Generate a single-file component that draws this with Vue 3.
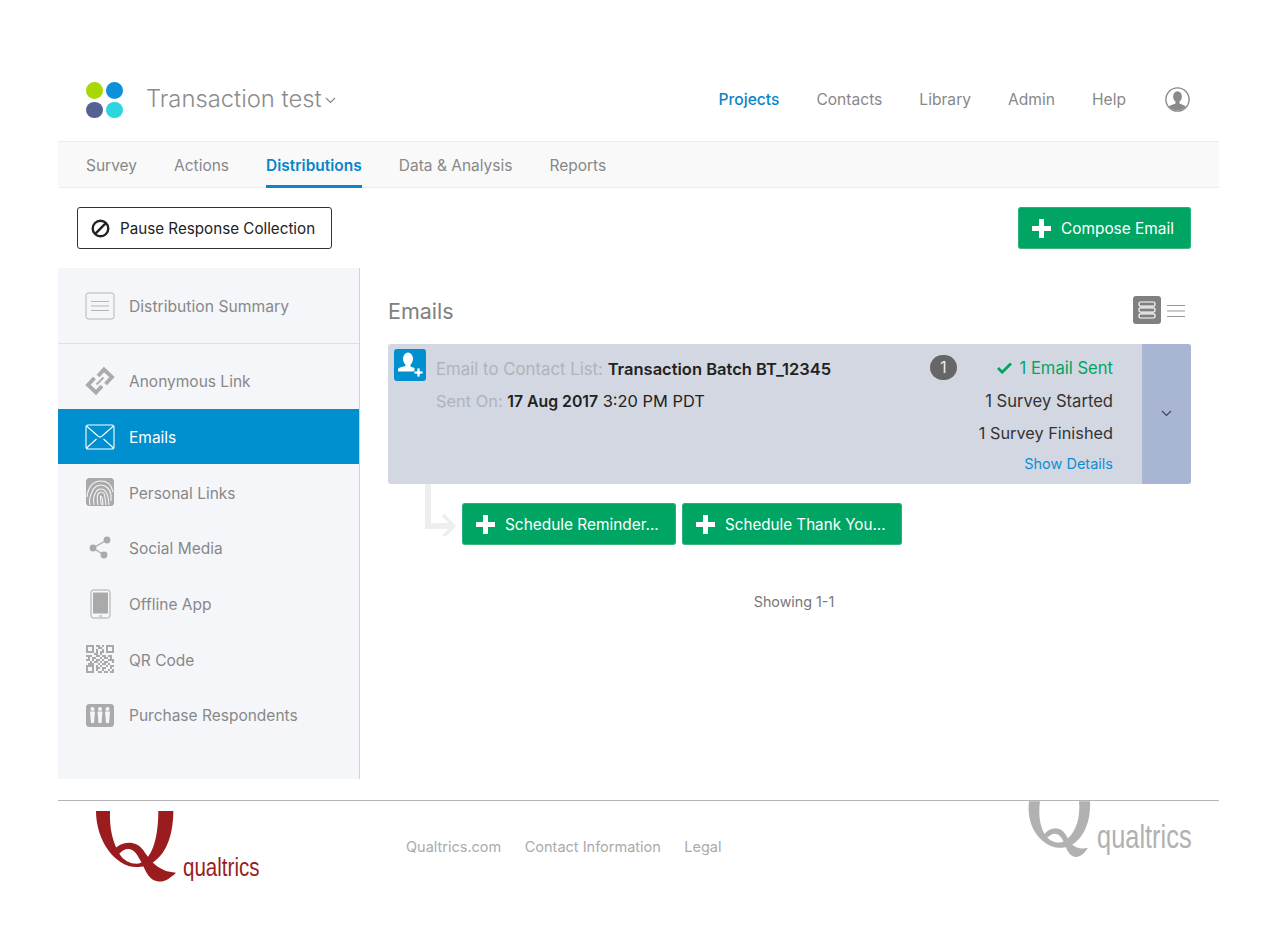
<script setup>
import { computed } from 'vue';

const navItems = ['Projects', 'Contacts', 'Library', 'Admin', 'Help'];
const tabs = ['Survey', 'Actions', 'Distributions', 'Data & Analysis', 'Reports'];
const sideItems = [
  { name: 'Anonymous Link', icon: 'link' },
  { name: 'Emails', icon: 'mail', active: true },
  { name: 'Personal Links', icon: 'finger' },
  { name: 'Social Media', icon: 'share' },
  { name: 'Offline App', icon: 'tablet' },
  { name: 'QR Code', icon: 'qr' },
  { name: 'Purchase Respondents', icon: 'people' },
];
const footerLinks = ['Qualtrics.com', 'Contact Information', 'Legal'];

// rough qr pattern, 14 x 14 cells
const qrRows = [
  '11110110101111',
  '10010011001001',
  '10010100101001',
  '11110101101111',
  '00001101000000',
  '11100110110110',
  '01011001011010',
  '11010110100111',
  '00101101011001',
  '01110010110100',
  '11110101001011',
  '10010110110010',
  '10010100100101',
  '11110011011011',
];
const qrCells = computed(() => {
  const cells = [];
  qrRows.forEach((row, y) => {
    row.split('').forEach((c, x) => {
      if (c === '1') cells.push({ x: x * 2, y: y * 2 });
    });
  });
  return cells;
});
</script>

<template>
  <div class="page">
    <header class="top">
      <div class="brand">
        <div class="dots">
          <i class="dot lime"></i><i class="dot blue"></i>
          <i class="dot navy"></i><i class="dot cyan"></i>
        </div>
        <span class="project">Transaction test</span>
        <svg class="caret" width="11" height="7" viewBox="0 0 11 7"><path d="M1 1l4.500 4.500L10 1" fill="none" stroke="#888" stroke-width="1.200"/></svg>
      </div>
      <nav class="nav">
        <a v-for="(n, i) in navItems" :key="n" :class="{ on: i === 0 }">{{ n }}</a>
        <svg class="avatar" width="25" height="25" viewBox="0 0 25 25">
          <defs><clipPath id="av"><circle cx="12.500" cy="12.500" r="11"/></clipPath></defs>
          <circle cx="12.500" cy="12.500" r="11.600" fill="#fff" stroke="#8a8a8a" stroke-width="1.400"/>
          <g clip-path="url(#av)" fill="#8a8a8a">
            <ellipse cx="12.500" cy="9.600" rx="4.400" ry="5.400"/>
            <path d="M10.500 14h4v2.400l6 2.600V25H4v-6l6.500-2.600z"/>
          </g>
        </svg>
      </nav>
    </header>

    <div class="tabs">
      <a v-for="t in tabs" :key="t" :class="{ on: t === 'Distributions' }">{{ t }}</a>
    </div>

    <div class="toolbar">
      <button class="pause">
        <svg width="19" height="19" viewBox="0 0 19 19"><circle cx="9.500" cy="9.500" r="7.800" fill="none" stroke="#222" stroke-width="2.400"/><path d="M4.200 14.800L14.800 4.200" stroke="#222" stroke-width="2.400"/></svg>
        Pause Response Collection
      </button>
      <button class="green compose">
        <svg class="plus" width="19" height="19" viewBox="0 0 19 19"><path d="M7 0h5v7h7v5h-7v7H7v-7H0V7h7z" fill="#fff"/></svg>
        Compose Email
      </button>
    </div>

    <div class="body">
      <aside class="side">
        <div class="summary">
          <svg class="ico" width="30" height="30" viewBox="0 0 30 30">
            <rect x="1" y="2" width="28" height="26" rx="2.500" fill="none" stroke="#b5b5b5" stroke-width="1"/>
            <path d="M6 10.500h18M6 15h18M6 19.500h18" stroke="#b5b5b5" stroke-width="1"/>
          </svg>
          <span>Distribution Summary</span>
        </div>
        <ul class="links">
          <li v-for="item in sideItems" :key="item.name" :class="{ active: item.active }">
            <svg class="ico" width="30" height="30" viewBox="0 0 30 30">
              <g v-if="item.icon === 'link'" fill="none" stroke="#aaa" stroke-width="3.800">
                <path d="M13 10l6-6.500L27 11l-6.500 7"/>
                <path d="M17 20l-6 6.500L3 19l6.500-7"/>
                <path d="M11.500 18.500l7-7" stroke-width="1.800"/>
              </g>
              <g v-else-if="item.icon === 'mail'" fill="none" stroke="#fff" stroke-width="1.100">
                <rect x="1" y="3" width="28" height="24" rx="2"/>
                <path d="M1.500 4l12 10.500q1.500 1 3 0L28.500 4M1.500 26l10-9M28.500 26l-10-9"/>
              </g>
              <g v-else-if="item.icon === 'finger'">
                <rect x="1" y="1" width="28" height="28" rx="3.500" fill="#aaa"/>
                <g fill="none" stroke="#f5f6fa" stroke-width="1.100">
                  <path d="M2 20C3 9 9 4 16 4s11 5 12 11"/>
                  <path d="M5 28c-1-4 0-9 2-13 2-5 6-7 9-7 5 0 9 4 10 10v6"/>
                  <path d="M9 28c-1-5 0-10 2-13 1-2 3-3 5-3 4 0 6 4 7 8l1 8"/>
                  <path d="M13 28c-1-4-1-8 0-11 1-1 2-2 3-2 3 0 4 3 4 6l1 7"/>
                  <path d="M16.500 28c-1-3-1-6-1-9 1 0 2 2 2 4l.5 5"/>
                </g>
              </g>
              <g v-else-if="item.icon === 'share'" fill="#aaa">
                <path d="M8 15l14-8M8 15l11 7" stroke="#aaa" stroke-width="1.300"/>
                <circle cx="8" cy="15" r="3.400"/>
                <circle cx="22" cy="7" r="3.400"/>
                <circle cx="19" cy="22" r="3.400"/>
              </g>
              <g v-else-if="item.icon === 'tablet'">
                <rect x="6" y="1" width="19" height="28" rx="2.500" fill="none" stroke="#aaa" stroke-width="1"/>
                <rect x="8" y="3.500" width="15" height="21" fill="#aaa"/>
                <rect x="14" y="26.500" width="3" height="1" fill="#aaa"/>
              </g>
              <g v-else-if="item.icon === 'qr'" fill="#aaa">
                <rect v-for="(c, i) in qrCells" :key="i" :x="c.x + 1" :y="c.y + 1" width="2" height="2"/>
              </g>
              <g v-else>
                <rect x="1" y="4" width="28" height="23" rx="3.500" fill="#aaa"/>
                <g fill="#f5f6fa">
                  <circle cx="7.500" cy="9" r="2"/><circle cx="15" cy="9" r="2"/><circle cx="22.500" cy="9" r="2"/>
                  <path d="M5 11.500h5l-1 11.500H6zM12.500 11.500h5l-1 11.500h-3zM20 11.500h5l-1 11.500h-3z"/>
                </g>
              </g>
            </svg>
            <span>{{ item.name }}</span>
          </li>
        </ul>
      </aside>

      <main class="main">
        <div class="main-head">
          <h2>Emails</h2>
          <div class="views">
            <span class="view-on">
              <svg width="18" height="18" viewBox="0 0 18 18" fill="none" stroke="#fff" stroke-width="1.200">
                <rect x="1" y="1" width="16" height="4.200" rx="1.500"/>
                <rect x="1" y="6.900" width="16" height="4.200" rx="1.500"/>
                <rect x="1" y="12.800" width="16" height="4.200" rx="1.500"/>
              </svg>
            </span>
            <svg width="18" height="14" viewBox="0 0 18 14" stroke="#999" stroke-width="1.100"><path d="M0 1.500h18M0 7h18M0 12.500h18"/></svg>
          </div>
        </div>

        <section class="card">
          <div class="card-icon">
            <svg width="32" height="32" viewBox="0 0 32 32">
              <rect width="32" height="32" rx="3" fill="#0090d0"/>
              <g fill="#fff">
                <ellipse cx="14" cy="10" rx="5" ry="6.500"/>
                <path d="M11.500 15h5v2.500l4 1.500v3.500H4V20.500q0-1.500 2-2l5.500-1.500z"/>
                <path d="M23 19h3v3h3v3h-3v3h-3v-3h-3v-3h3z" stroke="#0090d0" stroke-width=".8"/>
              </g>
            </svg>
          </div>
          <div class="card-info">
            <p class="line"><span class="lbl">Email to Contact List: </span><b>Transaction Batch BT_12345</b></p>
            <p class="line second"><span class="lbl">Sent On: </span><b>17 Aug 2017</b> 3:20 PM PDT</p>
          </div>
          <div class="count">1</div>
          <div class="stats">
            <div class="sent">
              <svg width="15" height="12" viewBox="0 0 15 12"><path d="M1 6l4.200 4.200L14 1.500" fill="none" stroke="#00a564" stroke-width="2.800"/></svg>
              1 Email Sent
            </div>
            <div class="stat">1 Survey Started</div>
            <div class="stat">1 Survey Finished</div>
            <a class="details">Show Details</a>
          </div>
          <div class="expand">
            <svg width="11" height="7" viewBox="0 0 11 7"><path d="M1 1l4.500 4.500L10 1" fill="none" stroke="#444" stroke-width="1.100"/></svg>
          </div>
        </section>

        <div class="followups">
          <svg class="elbow" width="32" height="52" viewBox="0 0 32 52" fill="none" stroke="#eeeeee" stroke-width="6">
            <path d="M4 0v42h24"/>
            <path d="M19 31l11 11-11 11" stroke-width="3.500"/>
          </svg>
          <button class="green reminder">
            <svg class="plus" width="19" height="19" viewBox="0 0 19 19"><path d="M7 0h5v7h7v5h-7v7H7v-7H0V7h7z" fill="#fff"/></svg>
            Schedule Reminder...
          </button>
          <button class="green thanks">
            <svg class="plus" width="19" height="19" viewBox="0 0 19 19"><path d="M7 0h5v7h7v5h-7v7H7v-7H0V7h7z" fill="#fff"/></svg>
            Schedule Thank You...
          </button>
        </div>

        <div class="showing">Showing 1-1</div>
      </main>
    </div>

    <footer class="foot">
      <div class="logo red">
        <svg width="170" height="72" viewBox="78 47 510 216" fill="#9b1c1f">
          <path d="M78 47h42c-2 53 8 93 28 128 12 20 32 30 52 30 35 0 65-55 65-158h45c0 83-30 163-105 168C140 220 78 140 78 47z"/>
          <path d="M130 165c20-25 65-35 90 0 20 30 45 65 98 67-18 18-38 30-56 26-32-6-37-43-57-73-15-30-40-30-57-10z"/>
        </svg>
        <span class="word">qualtrics</span>
      </div>
      <div class="foot-links">
        <a v-for="l in footerLinks" :key="l">{{ l }}</a>
      </div>
      <div class="logo gray">
        <svg width="64" height="57" viewBox="82 30 192 170" fill="#b1b1b1">
          <path d="M85 30h33c-6 40 0 85 22 110 15 15 35 18 50 10 35-20 50-70 45-120h33c4 70-28 135-83 140C125 172 75 110 85 30z"/>
          <path d="M130 130c20-25 50-25 65 0 15 30 30 48 67 40-12 20-27 30-40 27-27-7-27-47-44-62-13-13-28-7-38 5z"/>
        </svg>
        <span class="word">qualtrics</span>
      </div>
    </footer>
  </div>
</template>

<style scoped>
.page {
  width: 1161px;
  margin-left: 58px;
  font-family: Inter, "Liberation Sans", sans-serif;
  font-size: 15.500px;
  color: #888;
}
a { cursor: pointer; }
.top {
  height: 142px;
  box-sizing: border-box;
  padding: 81px 29px 0 28px;
  display: flex;
  justify-content: space-between;
  align-items: flex-start;
  border-bottom: 1px solid #ececec;
}
.brand {
  display: flex;
  align-items: center;
  height: 37px;
}
.dots {
  display: grid;
  grid-template-columns: 17px 17px;
  grid-auto-rows: 16.500px;
  gap: 3px;
  margin: 1px 23px 0 0;
}
.dot { border-radius: 50%; display: block; }
.lime { background: #a9d800; }
.blue { background: #0c90dc; }
.navy { background: #556193; }
.cyan { background: #2ed5de; }
.project {
  font-size: 23.800px;
  font-weight: 300;
  color: #8c8c8c;
  margin: -2px 3px 0 0;
}
.caret { margin-top: 2px; }
.nav {
  display: flex;
  align-items: center;
  gap: 37px;
  height: 37px;
  font-size: 15.600px;
}
.nav a.on { color: #0a85c7; font-weight: 500; }
.avatar { margin-left: 2px; }
.tabs {
  height: 46px;
  box-sizing: border-box;
  padding-left: 28px;
  display: flex;
  gap: 37px;
  background: #f9f9f9;
  border-bottom: 1px solid #ececec;
}
.tabs a {
  height: 46px;
  line-height: 47px;
  box-sizing: border-box;
}
.tabs a.on {
  color: #0a85c7;
  font-weight: 600;
  border-bottom: 3px solid #0a85c7;
}
.toolbar {
  height: 80px;
  box-sizing: border-box;
  padding: 19px 28px 0 19px;
  display: flex;
  justify-content: space-between;
  align-items: flex-start;
}
button {
  font-family: inherit;
  font-size: 15.400px;
  height: 42px;
  border-radius: 3px;
  display: inline-flex;
  align-items: center;
  cursor: pointer;
  box-sizing: border-box;
}
.pause {
  width: 255px;
  padding: 0 0 0 13px;
  gap: 10px;
  font-size: 15.200px;
  background: #fff;
  border: 1px solid #333;
  color: #222;
}
.green {
  background: #00a564;
  border: 1px solid #28b07a;
  border-bottom-color: #3cb882;
  color: #fff;
  padding: 0 0 0 13px;
  gap: 10px;
}
.compose { width: 173px; }
.reminder { width: 214px; }
.thanks { width: 220px; font-size: 15.200px; }
.body { display: flex; }
.side {
  width: 302px;
  height: 511px;
  box-sizing: border-box;
  background: #f5f6fa;
  border-right: 1px solid #d3d3d6;
  flex: none;
}
.side span { margin-top: 2px; }
.summary {
  height: 76px;
  box-sizing: border-box;
  display: flex;
  align-items: center;
  padding-left: 27px;
  gap: 14px;
  font-size: 15.700px;
  border-bottom: 1px solid #dfe0e2;
}
.links {
  list-style: none;
  margin: 0;
  padding: 9px 0 0;
}
.links li {
  height: 55.700px;
  display: flex;
  align-items: center;
  padding-left: 27px;
  gap: 14px;
}
.links li.active {
  background: #0090d0;
  color: #fff;
}
.ico { flex: none; }
.main {
  flex: 1;
  padding: 0 28px;
  min-width: 0;
}
.main-head {
  height: 76px;
  display: flex;
  justify-content: space-between;
  align-items: center;
  box-sizing: border-box;
  padding-top: 10px;
}
.main-head h2 {
  margin: 0;
  font-size: 21.500px;
  font-weight: 400;
  color: #808080;
}
.views {
  display: flex;
  align-items: center;
  gap: 6px;
  margin-right: 6px;
  margin-top: -2px;
}
.views > svg { margin-top: 1px; }
.view-on {
  width: 28px;
  height: 28px;
  border-radius: 3px;
  background: #808080;
  display: flex;
  align-items: center;
  justify-content: center;
}
.card {
  height: 140px;
  background: #d3d7e1;
  border-radius: 3px;
  display: flex;
  position: relative;
  overflow: hidden;
}
.card-icon {
  width: 32px;
  height: 32px;
  margin: 5px 0 0 6px;
  flex: none;
}
.card-info {
  margin-left: 10px;
  flex: 1;
  padding-top: 14px;
  color: #222;
  font-size: 16.800px;
}
.line { margin: 0; line-height: 22px; white-space: nowrap; }
.line b { font-weight: 600; font-size: 16.500px; }
.second { margin-top: 10px; font-size: 16.400px; }
.second b { font-size: 15.800px; }
.lbl { color: #b1b3b8; }
.count {
  width: 27px;
  height: 25px;
  border-radius: 13px;
  background: #666;
  color: #eee;
  text-align: center;
  line-height: 25px;
  margin-top: 11px;
  flex: none;
}
.stats {
  width: 156px;
  margin-right: 29px;
  text-align: right;
  color: #333;
  font-size: 16.600px;
  padding-top: 13px;
  flex: none;
}
.sent {
  color: #00a564;
  line-height: 22px;
  display: flex;
  justify-content: flex-end;
  align-items: center;
  gap: 7px;
}
.stat { line-height: 22px; margin-top: 10.500px; }
.stat + .stat { font-size: 16.300px; }
.details {
  display: block;
  color: #0a8fd6;
  font-size: 14.500px;
  line-height: 20px;
  margin-top: 10px;
}
.expand {
  width: 49px;
  background: #a9b6d3;
  flex: none;
  display: flex;
  align-items: center;
  justify-content: center;
}
.expand svg { margin-bottom: 2px; }
.followups {
  display: flex;
  gap: 6px;
  padding: 19px 0 0 74px;
  position: relative;
}
.elbow {
  position: absolute;
  left: 36px;
  top: 0;
}
.showing {
  margin-top: 48px;
  margin-left: 9px;
  text-align: center;
  font-size: 14.300px;
  line-height: 18px;
  color: #777;
}
.foot {
  margin-top: 21px;
  height: 100px;
  border-top: 1px solid #b5b5b5;
  position: relative;
  display: flex;
  justify-content: space-between;
}
.logo { flex: none; position: relative; }
.logo.red {
  width: 170px;
  margin: 10px 0 0 38px;
}
.logo.gray {
  width: 164px;
  margin-right: 27px;
}
.logo svg { display: block; }
.word {
  position: absolute;
  transform-origin: left top;
  transform: scaleX(.77);
  font-family: "Liberation Sans", sans-serif;
  white-space: nowrap;
}
.red .word {
  left: 87px;
  top: 41px;
  font-size: 26px;
  transform: scaleX(.79);
  color: #9b1c1f;
}
.gray .word {
  left: 69px;
  top: 17px;
  font-size: 33px;
  color: #b1b1b1;
}
.foot-links {
  position: absolute;
  left: 348px;
  top: 37px;
  display: flex;
  gap: 23.500px;
  font-size: 14.500px;
  color: #aaa;
}
</style>

<style>
button { outline: none; }
</style>
